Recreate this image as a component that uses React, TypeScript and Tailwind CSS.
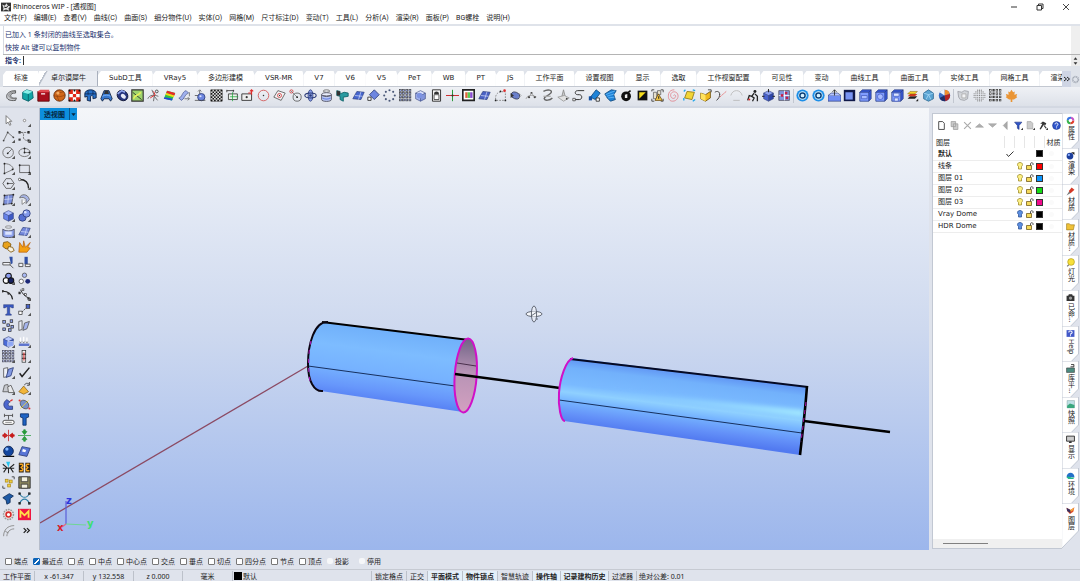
import type { ReactNode } from "react";

const NAVY = "#2a3a78";
const BLUE = "#6d86e0";
const SKY = "#1f83d8";

type Tool = [label: string, art: ReactNode];

const box = (face: string, top: string, side: string) => (
  <>
    <path d="M2 5l6-3 6 3-6 3z" fill={top} />
    <path d="M2 5l6 3v7l-6-3z" fill={face} />
    <path d="M14 5l-6 3v7l6-3z" fill={side} />
    <path d="M2 5l6-3 6 3v7l-6 3-6-3zM2 5l6 3 6-3M8 8v7" fill="none" stroke={NAVY} strokeWidth=".7" />
  </>
);

const dots = (points: number[][], fill = "#222", r = 1.1) =>
  points.map(([x, y]) => <circle key={`${x}-${y}`} cx={x} cy={y} r={r} fill={fill} />);

const squares = (points: number[][], size: number, fill: string, stroke = "#222") =>
  points.map(([x, y]) => (
    <rect key={`${x}-${y}`} x={x} y={y} width={size} height={size} fill={fill} stroke={stroke} strokeWidth=".8" />
  ));

const lattice = (n: number, step: number, start: number) =>
  Array.from({ length: n * n }, (_, i) => [start + (i % n) * step, start + Math.floor(i / n) * step]);

const plane = (fill: string) => (
  <>
    <path d="M1 12L6 3l9 1-4 9z" fill={fill} stroke={NAVY} strokeWidth=".8" />
    <path d="M3.500 8l9.500 1M8 13l3-9.500" stroke="#dfe6ff" strokeWidth=".8" />
  </>
);

const gearBlue = (
  <>
    <circle cx="8" cy="8" r="7.500" fill="#1d8fe8" />
    <circle cx="8" cy="8" r="5.200" fill="#d5f1ff" />
    <circle cx="8" cy="8" r="3.200" fill="none" stroke="#0b3f78" strokeWidth="1.800" />
  </>
);

const blueBlock = (inner: ReactNode) => (
  <>
    <path d="M1 4l3-3h11v11l-3 3H1z" fill="#3657d6" />
    <path d="M1 4h11v11H1z" fill="#7f9cff" />
    <path d="M1 4l3-3h11v11l-3 3H1zM1 4h11v11M12 4l3-3" fill="none" stroke={NAVY} strokeWidth=".8" />
    {inner}
  </>
);

const groupA: Tool[] = [
  ["弯管", <><path d="M13 2C5 2 2 6 2 9c0 4 4 6 11 5l1-3c-5 1-7-1-7-3s2-3 6-3z" fill="#c7c9cd" stroke="#444" /><path d="M12 3C6 4 4 7 5 9s3 3 8 3" fill="none" stroke="#777" /></>],
  ["立方体", <><path d="M2 4l5-3 7 2 1 8-6 4-7-3z" fill="#13a6a6" stroke="#075c66" /><path d="M2 4l7 2 5-3-7-2z" fill="#8af0e8" /><path d="M9 6v9" stroke="#075c66" /></>],
  ["红色方盒", <><path d="M1 3h14v12H1z" fill="#a80f1c" stroke="#500" /><path d="M1 3l3-2h11v3H1z" fill="#e04a50" /><path d="M5 6h5" stroke="#fff" strokeWidth="1.500" /></>],
  ["球体", <><circle cx="8" cy="8" r="7" fill="#d0671a" stroke="#5b2606" /><path d="M1 8c5 2 9 2 14-1M6 1c-2 5-1 10 2 14M3 3c4 2 7 2 10 0" fill="none" stroke="#8e4210" strokeWidth=".8" /><circle cx="6" cy="5" r="2" fill="#f5ab62" /></>],
  ["棋盘格", <><path d="M1 1h14v14H1z" fill="#fff" stroke="#222" /><path d="M1 1h5v5H1zM10 1h5v5h-5zM6 6h4v4H6zM1 10h5v5H1zM10 10h5v5h-5z" fill="#e02818" />{dots([[2, 2], [8, 2], [14, 2], [2, 14], [8, 14], [14, 14]], "#111")}</>],
  ["拱面", <><path d="M1 6c0-3 3-5 7-5s7 2 7 5v5l-4 1V9c0-1-3-1-3 0v6l-4-1V9l-3 1z" fill="#2770c8" stroke="#0b1c3c" /><path d="M5 2v5M11 2v5M1 6h14" stroke="#0b1c3c" strokeWidth=".8" /></>],
  ["圆顶", <><path d="M5 2h6l4 10-2 3-2-3H5l-2 3-2-3z" fill="#3677ce" stroke="#0b1c3c" /><path d="M6 2h4l1 4H5z" fill="#333" /><path d="M3 9c3-2 7-2 10 0" stroke="#8ec3ff" fill="none" /></>],
  ["圆环", <><ellipse cx="8" cy="8" rx="7" ry="6" transform="rotate(40 8 8)" fill="#26357e" stroke="#0a1030" /><ellipse cx="9" cy="9" rx="3.500" ry="2.500" transform="rotate(40 9 9)" fill="#e8ecf8" /><path d="M2 6l5-4 4 2" stroke="#92a9ef" strokeWidth="2" fill="none" /></>],
  ["绿色框", <><path d="M1 1h14v14H1z" fill="#9ed46c" stroke="#333" strokeWidth="1.400" /><path d="M2 4l11 9" stroke="#222" /><path d="M3 12c3-6 6-3 9-8" stroke="#e8ef5a" strokeWidth="2" fill="none" /></>],
  ["修剪", <><path d="M1 12C3 7 9 7 14 9M9 8L6 1M9 8l-1 7M9 9l4 5" stroke="#444" fill="none" strokeWidth=".9" /><path d="M4 11l6-4M8 3l2 4" stroke="#e02b2b" strokeWidth="1.200" /><circle cx="12" cy="3" r="1.700" fill="none" stroke="#333" /></>],
  ["曲率分析", <><path d="M5 2l10 3-4 9-10-2z" fill="#29c04a" /><path d="M5 2l10 3-1 3-10-3z" fill="#e82929" /><path d="M4 5l10 3-1 2-10-3z" fill="#f4d817" /><path d="M2 10l10 2-1 2-10-2z" fill="#2743dd" /></>],
  ["曲面流动", <><path d="M1 11c4 0 4-8 9-9l3 3c-5 1-5 8-9 9z" fill="#9fb0ee" stroke={NAVY} strokeWidth=".7" /><path d="M8 12h6M12 10l2 2-2 2M14 4v5" stroke="#555" fill="none" strokeWidth=".9" /></>],
  ["球面流动", <><circle cx="9" cy="10" r="4.500" fill={BLUE} stroke={NAVY} /><path d="M1 8h4M7 2v4M5 3l2-2 2 2M1 14h13" stroke="#444" fill="none" strokeWidth=".9" /><circle cx="8" cy="9" r="1.300" fill="#dbe3ff" /></>],
  ["网格", <><path d="M1 1h14v14H1z" fill="#eee" stroke="#555" />{lattice(7, 2, 1).filter((_, i) => i % 2 === 0).map(([x, y]) => <rect key={`${x}-${y}`} x={x} y={y} width="2" height="2" fill="#111" />)}</>],
  ["对齐矩形", <><path d="M1 1v3M1 2h9M9 1v3" fill="none" stroke="#333" /><path d="M3 6h11v7H3z" fill="#eaf3ea" stroke="#333" /><path d="M5 9.500h10M8 4v11" stroke="#21a33c" strokeWidth=".9" /></>],
  ["移动矩形", <><path d="M1 6h12v8H1z" fill="#eee" stroke="#333" strokeWidth="1.100" /><circle cx="7" cy="10" r="1.300" fill="#333" /><path d="M9 5h4M13 1v6M11 3l2-2 2 2" stroke="#e02b2b" fill="none" strokeWidth="1.300" /></>],
  ["圆", <><circle cx="8" cy="8" r="6.500" fill="none" stroke="#d25a5a" strokeWidth="1.100" />{dots([[8, 8]], "#333", 0.9)}</>],
  ["定向", <><path d="M6 2l9 3-5 9-9-4z" fill="#f4f4f6" stroke="#555" /><circle cx="8" cy="8" r="2.500" fill="none" stroke="#d23a3a" />{dots([[8, 8]], "#333", 0.8)}</>],
  ["切线圆", <><circle cx="10" cy="10" r="5" fill="none" stroke="#555" /><path d="M2 2l8 8" stroke="#777" /><circle cx="3" cy="3" r="2" fill="none" stroke="#d23a3a" />{dots([[10, 10]])}</>],
  ["三维旋转", <><ellipse cx="8" cy="8" rx="3" ry="7" fill="#8ba0ea" stroke={NAVY} /><ellipse cx="8" cy="8" rx="7" ry="3" fill="none" stroke={NAVY} strokeWidth="1.300" />{dots([[8, 8]], NAVY, 1.6)}</>],
  ["放样", <><ellipse cx="8" cy="2.500" rx="4" ry="1.500" fill="none" stroke="#666" /><ellipse cx="8" cy="6.500" rx="6" ry="2" fill="#e8edfb" stroke="#556" /><path d="M2 7v6c0 3 12 3 12 0V7c-1 3-11 3-12 0z" fill="#b9c8f6" stroke="#445" /><path d="M3 11c2 2 8 2 10 0" fill="none" stroke={BLUE} strokeWidth="1.500" /></>],
  ["夹具", <><path d="M1 2l4 1v3l5-2 5 1v4l-6 1v5l-4-2V9L1 8z" fill="#2a9aa0" stroke="#0a5e64" /><path d="M1 2l4 1v5L1 8z" fill="#333" /></>],
  ["平面", plane("#4666cf")],
  ["菱形面", <><path d="M9 1l6 6-6 6-6-6z" fill={BLUE} stroke={NAVY} /><path d="M1 10h4v4H1z" fill="#fff" stroke="#222" /></>],
  ["环形阵列", <>{dots([[8, 1.5], [12.5, 3.500], [14.5, 8], [12.5, 12.500], [8, 14.500], [3.5, 12.500], [1.5, 8], [3.5, 3.500]], "#4a5878", 1.3)}</>],
  ["矩形阵列", <>{squares(lattice(4, 3.9, 0.5), 2.4, "#8fa0e0", "#444")}</>],
  ["球体方盒", <>{box("#a5b4ee", "#dbe2fb", "#8496dc")}<circle cx="7" cy="8" r="3.500" fill="#7d93e2" /></>],
];

const groupB: Tool[] = [
  ["企鹅", <><path d="M3 1h10v14H3z" fill="#f6f6f6" stroke="#333" strokeWidth="1.200" /><path d="M5 6c0-4 6-4 6 0z" fill="#333" /><path d="M5 7h6v6H5z" fill="#fff" stroke="#333" /></>],
  ["坐标轴", <><path d="M8 1v14" stroke="#2a9a3c" strokeWidth="1.300" /><path d="M0 8h16" stroke="#cc2f2f" strokeWidth="1.300" /><circle cx="8" cy="8" r="1.300" fill="#333" /></>],
  ["图像平面", <><path d="M1 1h14v13H1z" fill="#fff" stroke="#222" strokeWidth="2" /><path d="M4 4h3v7H4z" fill="#e2653d" /><path d="M7 4h3v7H7z" fill="#57cf52" /><path d="M10 4h3v7h-3z" fill="#8a4cd0" /></>],
  ["曲面网", plane("#4a62c4")],
  ["曲线控制点", <><path d="M2 13c-1-9 6-11 12-9M3 14h11V5" fill="none" stroke="#777" strokeDasharray="2 1.500" />{dots([[2, 14], [8, 3], [14, 14]])}{dots([[13, 2]], "#dd2b2b", 1.6)}</>],
  ["椭球", <><ellipse cx="8" cy="8" rx="5.500" ry="4" transform="rotate(20 8 8)" fill="#6a7fcb" stroke="#3a3f5c" /><path d="M2 5l4 3-4 3z" fill="#333" /><path d="M12 5l3 3-3 3" stroke="#aaa" fill="none" /></>],
  ["点编辑", <><path d="M1 12c4-6 8-5 13-2" fill="none" stroke="#aaa" strokeWidth="1.300" />{dots([[5, 10], [8, 5], [12, 10]], "#444", 1.3)}<path d="M8 5l4 5M8 5l-3 5" stroke="#888" strokeWidth=".8" /></>],
  ["扫掠", <><path d="M3 3c5-3 12-2 9 2s-9 4-8 7 7 2 10-1" fill="none" stroke="#666" strokeWidth="1.700" /><path d="M3 9h9" stroke="#aaa" strokeWidth="1.500" /></>],
  ["尖锥", <><path d="M8 1l2 8H6z" fill="#ccc" stroke="#888" /><path d="M1 10l8-2 6 3-7 4z" fill="#e2e2e2" stroke="#999" />{dots([[12, 12]], "#444")}</>],
  ["曲线混接", <><path d="M15 2H7c-4 0-4 5 0 5h2c4 0 4 6 0 6H2" fill="none" stroke="#333" strokeWidth="1.200" /><path d="M1 11.500h3v3H1z" fill="#fff" stroke="#222" strokeWidth=".8" /></>],
  ["蓝色刷", <><path d="M3 10l7-9 5 4-6 8z" fill={SKY} stroke="#0c4477" /><path d="M1 9h4v5H1z" fill="#1450a0" /><path d="M10 11h4v4h-4z" fill="#fff" stroke="#222" /></>],
  ["蓝色扇面", <><path d="M1 6l8-5 6 1-3 5 2 6-6 2-4-4z" fill={SKY} stroke="#0c4477" /><path d="M2 7l12-5M3 9l10-3M5 11l8-1" stroke="#78c8ff" strokeWidth=".8" /></>],
  ["旋钮", <><circle cx="7.500" cy="9" r="6" fill="#111" /><path d="M6 7l3-1v5H6z" fill="#eee" /><path d="M9 5l4-3" stroke="#111" strokeWidth="2" /></>],
  ["黑黄方块", <><path d="M2 2h12v12H2z" fill="#111" /><path d="M4 4h8l-8 8z" fill="#f5dc1b" /></>],
  ["警告", <><path d="M1 3V1h3M12 1h3v3M1 12v3h3M12 15h3v-3" stroke="#333" fill="none" /><path d="M3 4h4v8H3zM8 2h4v5H8z" fill="#e6e0cc" stroke="#666" /><path d="M9 6l5 8H5z" fill="#f5cc4b" stroke="#6a4a10" /><path d="M9.500 9v3" stroke="#222" strokeWidth="1.300" /></>],
  ["螺旋", <><path d="M8 8c1-2 4 0 2 2.500S4 11 4.500 7 11 2 13 6s-1 9-6 9S1 10 2 6s4-5 7-5" fill="none" stroke="#e0808a" strokeWidth="1" /></>],
  ["黄色面", <><path d="M5 3l9 1-3 9-9-2z" fill="#f2d536" stroke="#8a7410" /><path d="M1 3l2-2M12 1l3 1M1 14v-3M12 15l3-2" stroke="#21a5e8" strokeWidth="1.600" /></>],
  ["黄色盒", <><path d="M2 5l6 2 6-4v8l-6 4-6-3z" fill="#efb91d" stroke="#6b4c07" /><path d="M2 5l6 2v8l-6-3z" fill="#ffe25e" /><path d="M11 1h4v3" fill="none" stroke="#333" /></>],
  ["曲线延伸", <><path d="M3 14c3-2 4-5 4-8M1 4c3-2 6-1 6 3" fill="none" stroke="#444" strokeWidth="1.200" /><path d="M7 10L15 3" stroke="#e15252" strokeDasharray="2 1" /></>],
  ["灰拱", <><path d="M1 8c2-8 12-8 14 0M4 14h8" fill="none" stroke="#bbb" strokeWidth="1.100" /></>],
  ["人形", <><circle cx="11" cy="3" r="1.800" fill="#222" /><path d="M10 5l-3 4 3 2-2 4M11 6l3 3v6M2 14l2-6 3 1" fill="none" stroke="#222" strokeWidth="1.600" />{dots([[4, 13]], "#de3131", 1.3)}</>],
  ["蓝色立方", <>{box("#4a64cf", "#8da2f2", "#2f46a8")}<path d="M8 0v4M0 9h3M13 9h3" stroke="#222" strokeWidth="1.200" /></>],
  ["拼块", <><path d="M1 2h13v12H1z" fill="#8398dd" stroke="#556" /><path d="M8 2v12M1 8h13" stroke="#fff" />{dots([[10, 5], [5, 8], [11, 11]], "#c4214b", 1.7)}</>],
];

const groupC: Tool[] = [
  ["设置", gearBlue],
  ["选项", gearBlue],
  ["挤出", <><path d="M0 8h16v7H0z" fill="#6f8df4" stroke={NAVY} strokeWidth=".8" /><path d="M0 8l4-3h8l4 3" fill="#b6c5ff" stroke={NAVY} strokeWidth=".8" /><path d="M8 8V1M5.500 3.500L8 1l2.500 2.500" fill="none" stroke="#222" /></>],
  ["深蓝框", <><path d="M1 1h14v14H1z" fill="#10194a" /><path d="M3 4h9v9H3z" fill="#7893f2" /></>],
  ["蓝盒", blueBlock(<path d="M3 8h7v4H3z" fill="#a9bcff" stroke="#4a62c8" />)],
  ["圆孔盒", blueBlock(<circle cx="6.500" cy="9.500" r="3.500" fill="#a9bcff" stroke="#4a62c8" />)],
  ["存盘盒", blueBlock(<path d="M3 5h7v4H3zM4 11h5v4H4z" fill="#dbe4ff" stroke="#4a62c8" />)],
  ["图层堆叠", <><path d="M2 12l3-3h9l-3 3z" fill="#222" /><path d="M2 9l3-3h9l-3 3z" fill="#d33820" /><path d="M2 6l3-3h9l-3 3z" fill="#f6d32b" stroke="#7b5b0e" strokeWidth=".6" /><path d="M12 15l3-3v3z" fill="#222" /></>],
  ["多面体", <><path d="M8 1l6 4v7l-6 3-6-3V5z" fill="#5aa4d3" stroke="#2e6890" /><path d="M2 5l6 2 6-2M8 7l-3 6M8 7l3 6" stroke="#b9e4ff" fill="none" strokeWidth=".8" /></>],
  ["色球", <><circle cx="8" cy="8" r="7" fill="#3a6fc8" /><path d="M8 8L8 1a7 7 0 0 1 6.500 5z" fill="#ef8c2d" /><path d="M8 8l6.500-2A7 7 0 0 1 9 15z" fill="#b52323" /><path d="M8 8L2 4a7 7 0 0 1 6-3z" fill="#eef3fb" /><path d="M8 8l1 7a7 7 0 0 1-7-4z" fill="#222d66" /></>],
];

const groupD: Tool[] = [
  ["灰旗", <><path d="M1 3l5 1 3-2 5 1-1 9-4 2-5-1-2-3z" fill="#d2d5da" stroke="#9d9fa6" /><path d="M6 6h5v5H6z" fill="#f2f3f5" stroke="#aaa" /></>],
  ["点阵球", <>{dots(lattice(7, 2.2, 1.4).filter(([x, y]) => (x - 8) ** 2 + (y - 8) ** 2 < 50), "#777", 0.7)}</>],
  ["点阵", <>{squares(lattice(4, 4, 0.7), 2, "#fff", "#333")}</>],
  ["枫叶", <path d="M8 1l2 3 2-1-.5 4L15 6l-1 3 1 1-4 3H9v3H7v-3H5l-4-3 1-1-1-3 3.500 1L4 3l2 1z" fill="#ea9535" />],
];

const sideTools: Tool[] = [
  ["选择", <path d="M5 2v10l2.500-2 2 4 1.500-1-2-4h3z" fill="#fff" stroke="#666" />],
  ["点", <circle cx="8" cy="8" r="1.500" fill="#fff" stroke="#777" />],
  ["多段线", <><path d="M2 13L7 3l7 6" fill="none" stroke="#666" />{dots([[2, 13], [7, 3], [14, 9]], "#444")}</>],
  ["控制点曲线", <><path d="M3 3h10M3 3c9 0-2 9 9 10" fill="none" stroke="#666" strokeDasharray="3 1" />{squares([[1, 2], [12, 2], [1, 11], [12, 12]], 2, "#fff")}</>],
  ["圆", <><circle cx="7.500" cy="8" r="6.500" fill="none" stroke="#666" /><path d="M7 9l5-5" stroke="#555" />{dots([[7, 9]])}</>],
  ["椭圆", <><ellipse cx="8" cy="8" rx="7" ry="5" fill="none" stroke="#666" /><path d="M8 3v5h6" fill="none" stroke="#666" />{dots([[8, 8], [8, 3], [14, 8]])}</>],
  ["圆弧", <><path d="M3 2c8 0 11 5 11 7L3 14z" fill="none" stroke="#666" />{dots([[3, 2], [13, 9], [3, 14]])}</>],
  ["矩形", <><path d="M2 4h12v9H2z" fill="none" stroke="#555" />{dots([[2, 4], [14, 13]])}</>],
  ["多边形", <><path d="M5 2h6l4 6-4 6H5L1 8z" fill="none" stroke="#555" /><path d="M7 8h7" stroke="#555" />{dots([[7, 8]])}</>],
  ["圆角", <><path d="M2 3c7 0 11 3 11 11" fill="none" stroke="#222" strokeWidth="1.700" /><circle cx="2" cy="3" r="1.500" fill="#fff" stroke="#444" /></>],
  ["曲面", <><path d="M3 3l11-1-2 11-10 1z" fill="#7c90dc" stroke="#445" />{dots([[3, 3], [14, 2], [12, 13], [2, 14]])}<path d="M3 8l10-1M8 3l-1 11" stroke="#dde5ff" strokeWidth=".8" /></>],
  ["旋转曲面", <><path d="M2 6C3 1 12 0 14 8l-4 5V8C8 5 5 5 2 6z" fill="#a7b4e4" stroke="#666" /><path d="M5 8v6l4-3" fill="#fff" stroke="#777" /></>],
  ["立方体", box("#6783ea", "#a9bbff", "#3e59c4")],
  ["布尔", <><circle cx="5.500" cy="10.500" r="4.500" fill="#5570d2" stroke={NAVY} /><circle cx="10.500" cy="5.500" r="4.500" fill="#8299ea" stroke={NAVY} /><circle cx="9" cy="4" r="1.500" fill="#dbe4ff" /></>],
  ["管状", <><ellipse cx="8" cy="2.500" rx="4" ry="1.500" fill="none" stroke="#888" /><path d="M1 5c3 3 11 3 14 0v9c-3 2-11 2-14 0z" fill="#91a5ee" stroke="#445" /><path d="M4 8h8v4H4z" fill="#dce4ff" /></>],
  ["网格面", plane("#7388db")],
  ["拼图", <><path d="M2 3l5-1 4 3-1 4-5 2-4-3z" fill="#e9a21b" stroke="#7d5205" /><path d="M8 8l5 1 2 4-4 2-4-3z" fill="#f8f1de" stroke="#7d5205" /></>],
  ["炸开", <path d="M1 15l1-12 4 6 1-8 2 8 6-6-3 6 3 1-4 5z" fill="#f4a012" stroke="#b25606" strokeWidth=".8" />],
  ["修剪", <><path d="M9 1h4v8l-2 1z" fill="#2f4fa4" /><path d="M1 8h9v3H1zM10 11l4 4" stroke="#444" fill="#f3f4f7" /></>],
  ["分割", <><path d="M8 1h4v9H8z" fill="#2f4fa4" /><path d="M1 9h5v4H1zM9 10h6v3H9z" fill="#f3f4f7" stroke="#444" /></>],
  ["群组", <><circle cx="8" cy="5" r="3.500" fill="#8c9ef0" stroke="#111" strokeWidth="1.300" /><circle cx="5" cy="10.500" r="3.500" fill="#fff" stroke="#111" strokeWidth="1.300" /><circle cx="11" cy="10.500" r="3.500" fill="#16205e" stroke="#111" strokeWidth="1.300" /></>],
  ["解散群组", <><circle cx="8" cy="4" r="2.700" fill="#a7b8f4" stroke="#555" /><circle cx="4" cy="11.500" r="2.700" fill="#fff" stroke="#555" /><circle cx="12" cy="11.500" r="3" fill="#1e2a78" /></>],
  ["弧线", <><path d="M1 4c7 0 11 4 12 10" fill="none" stroke="#222" strokeWidth="1.500" />{dots([[1, 4], [8, 7]], "#333", 1.4)}</>],
  ["弧线控制", <><path d="M3 2c3 6 6 9 12 11" fill="none" stroke="#333" strokeWidth="1.200" />{squares([[1, 5], [5, 1], [8, 7], [12, 12]], 2.2, "#fff")}</>],
  ["文字", <path d="M2 2h12v4h-2l-1-1H9.500v8l2 1v1h-7v-1l2-1V5H5L4 6H2z" fill="#3858c0" stroke={NAVY} strokeWidth=".6" />],
  ["连接", <><path d="M5 11l6-6" stroke="#333" strokeDasharray="2 1" />{squares([[1, 10]], 4, "#fff")}{squares([[10, 2]], 4.5, "#4863c8")}</>],
  ["散布", <>{squares([[1, 2], [10, 1], [6, 6], [11, 8], [1, 11], [8, 12]], 3.2, "#8fa3ea")}</>],
  ["板", <><path d="M1 3l4-1v11l-4 1z" fill="#e9ecf5" stroke="#555" /><path d="M8 5l6-2-3 9-5 2z" fill="#a4b4ee" stroke="#555" /></>],
  ["块", <>{box("#4b6bd8", "#b8c8ff", "#3653b8")}<path d="M7 8h7v6H7z" fill="#8da6f6" stroke="#fff" strokeWidth=".6" /></>],
  ["投影", <><path d="M1 12h13" stroke="#5d74ce" strokeWidth="3" /><path d="M3 9V3M7 9V2M11 9V3" stroke="#fff" strokeWidth="1.600" /><path d="M2 8l1 2 1-2M6 8l1 2 1-2M10 8l1 2 1-2" stroke="#444" fill="none" strokeWidth=".6" /></>],
  ["阵列", <>{squares(lattice(4, 3.9, 0.5), 2.4, "#c4cef6", "#445")}</>],
  ["堆叠", <>{squares([[5, 0.5], [5, 5.5], [5, 10.500]], 4.5, "#f6f6f6")}<path d="M7.300 3v10" stroke="#d32a2a" strokeWidth="1.300" /></>],
  ["旋转面", <><path d="M2 3l5-1v11l-5 1z" fill="#eef0f7" stroke="#555" /><path d="M8 4l6-2-3 10-6 2z" fill="#8299e2" stroke={NAVY} /></>],
  ["检查", <path d="M2 9l3 4 9-11" fill="none" stroke="#222" strokeWidth="1.800" />],
  ["灰形", <><path d="M1 12l2-8 4-1 3 9z" fill="#c8cad0" stroke="#555" /><path d="M7 6l4-2 4 9H8z" fill="#e8e9ec" stroke="#555" /></>],
  ["锥体", <><path d="M7 5l6 7-6 3-6-3z" fill="#f2b63b" stroke="#7b550f" strokeWidth=".8" /><path d="M8 4c1-3 4-3 6-1M14 0v4h-3" fill="none" stroke="#333" /></>],
  ["弯管", <><path d="M6 2c-5 3-5 9 0 12h7v-4H9C7 9 7 6 10 5z" fill="#4a66cf" stroke={NAVY} /><path d="M13 2l-3 2" stroke="#d33" strokeWidth="1.500" /></>],
  ["椭球", <><ellipse cx="8" cy="8" rx="6" ry="4.500" transform="rotate(45 8 8)" fill="#7891cb" stroke="#555" /><path d="M3 13L13 3" stroke="#e8d43b" />{dots([[2, 3], [14, 13]], "#d33", 1.3)}</>],
  ["尺寸", <><path d="M3 3h10M8 3v5M3 1v4M13 1v4" stroke="#444" /><rect x="1" y="9" width="14" height="5" rx="2.500" fill="#fff" stroke="#333" /><path d="M4 11.500h8" stroke="#777" /></>],
  ["螺栓", <path d="M3 1h10v4l-3 1v9H6V6L3 5z" fill="#1e63c4" stroke="#0b2d66" />],
  ["水平对齐", <path d="M8 1v14M1 7h3v2H1zM12 7h3v2h-3zM3 5v6l4-3zM13 5v6L9 8z" fill="#d61f1f" stroke="#c01515" strokeWidth=".9" />],
  ["垂直对齐", <path d="M0 8h16M5 3h6L8 7zM5 13h6L8 9zM7 1h2v3H7zM7 12h2v3H7z" fill="#27993a" stroke="#27993a" strokeWidth=".9" />],
  ["蓝球", <><path d="M1 14h14" stroke="#111" strokeWidth="1.500" /><circle cx="8" cy="7.500" r="6" fill="#12459f" stroke="#071c48" /><circle cx="6" cy="5" r="2" fill="#86b9ff" /></>],
  ["贴面", <><path d="M5 2l10 2-4 10-10-2z" fill="#5875d6" stroke={NAVY} /><path d="M6 5l4 1-1 3-4-1z" fill="#fff" /></>],
  ["切割", <><path d="M1 4l5 4-4 6M15 4l-5 4 4 6M8 8v7M1 9h14" fill="none" stroke="#222" strokeWidth="1.300" /><path d="M5 1h5l-2 7z" fill="#2bc3ec" /></>],
  ["拉链", <><path d="M1 2h6v12H1zM9 2h6v12H9z" fill="#2b2318" /><path d="M2 4h3l1 2-2 2 2 2-1 2H2M14 4h-3l-1 2 2 2-2 2 1 2h3" fill="none" stroke="#f5a51e" strokeWidth="1.800" /></>],
  ["选取方块", <>{squares([[4, 4], [9, 5], [7, 10]], 3.5, "#f2cf3b", "#a5831c")}<path d="M12 1h3v3M1 12v3h3" fill="none" stroke="#333" /></>],
  ["存储", <><path d="M1 1h14v14H1z" fill="#8c875e" stroke="#222" /><path d="M4 1h8v6H4zM4 10h8v5H4z" fill="#f2f0de" stroke="#333" /></>],
  ["蓝曲面", <path d="M1 7l8-5 5 3-4 3v5l-4 2-1-5z" fill="#1e5aa6" stroke="#0c2a55" />],
  ["节点曲线", <><path d="M2 2c3 6 9 6 12 0M2 14c3-7 9-7 12 0" fill="none" stroke="#2d7fa8" strokeWidth="1.300" />{squares([[1, 1], [13, 1], [1, 13], [13, 13]], 2, "#234")}</>],
  ["齿轮", <><circle cx="8" cy="8" r="6" fill="#f7eeee" stroke="#9a9a9a" strokeWidth="2" strokeDasharray="2 1" /><circle cx="8" cy="8" r="3" fill="#fff" stroke="#d72d2d" strokeWidth="2" /></>],
  ["渲染器", <><path d="M0 1h16v14H0z" fill="#ee1641" /><path d="M3 12V4l5 5 5-5v8" fill="none" stroke="#ffe14a" strokeWidth="2.200" /></>],
  ["偏移", <path d="M2 15C2 7 7 2 15 2M6 15c0-5 4-9 9-9M4 9l4 2" fill="none" stroke="#888" strokeWidth="1.100" />],
  ["更多", <path d="M7 5l3 3-3 3M11 5l3 3-3 3" fill="none" stroke="#222" strokeWidth="1.500" />],
];

const plainTools = new Set([0, 16, 17, 18, 19, 21, 22, 24, 26, 27]);

const menus = ["文件(F)", "编辑(E)", "查看(V)", "曲线(C)", "曲面(S)", "细分物件(U)", "实体(O)", "网格(M)", "尺寸标注(D)", "变动(T)", "工具(L)", "分析(A)", "渲染(R)", "面板(P)", "BG螺栓", "说明(H)"];

const toolTabs = ["标准", "卓尔谟犀牛", "SubD工具", "VRay5", "多边形建模", "VSR-MR", "V7", "V6", "V5", "PeT", "WB", "PT", "JS", "工作平面", "设置视图", "显示", "选取", "工作视窗配置", "可见性", "变动", "曲线工具", "曲面工具", "实体工具", "网格工具", "渲染"];

const layers = [
  { name: "默认", color: "#000000", current: true, on: true },
  { name: "线条", color: "#ff0000", current: false, on: true },
  { name: "图层 01", color: "#0a96ff", current: false, on: true },
  { name: "图层 02", color: "#14dc14", current: false, on: true },
  { name: "图层 03", color: "#f00a8c", current: false, on: true },
  { name: "Vray Dome", color: "#000000", current: false, on: false },
  { name: "HDR Dome", color: "#000000", current: false, on: false },
];

const panelTabs: Tool[] = [
  ["属性", <><circle cx="8" cy="8" r="5" fill="none" stroke="#e2402e" strokeWidth="3.500" strokeDasharray="8 24" /><circle cx="8" cy="8" r="5" fill="none" stroke="#37b34a" strokeWidth="3.500" strokeDasharray="8 24" strokeDashoffset="-8" /><circle cx="8" cy="8" r="5" fill="none" stroke="#3b76e0" strokeWidth="3.500" strokeDasharray="8 24" strokeDashoffset="-16" /><circle cx="8" cy="8" r="5" fill="none" stroke="#c553c8" strokeWidth="3.500" strokeDasharray="8 24" strokeDashoffset="-24" /></>],
  ["渲染", <><circle cx="7" cy="9" r="6" fill="#1c3e9c" /><circle cx="5" cy="7" r="2" fill="#8fb2ff" /><path d="M9 2h6v5" fill="#222" /></>],
  ["材质", <><path d="M1 15l5-8 3 3z" fill="#777" /><path d="M5 7l5-6 5 4-7 6z" fill="#d43a28" /></>],
  ["材质…", <path d="M1 3h5l2 2h7l-2 9H1z" fill="#f0c239" stroke="#94700e" />],
  ["灯光", <><path d="M5 12L2 15" stroke="#777" strokeWidth="2" /><circle cx="9" cy="7" r="6" fill="#f7e03a" stroke="#a08b0e" /></>],
  ["已命…", <><path d="M1 5h3l1-3h6l1 3h3v9H1z" fill="#333" /><circle cx="8" cy="9" r="3" fill="#999" /></>],
  ["Help", <><path d="M1 2h14v12H1z" fill="#4258c8" /><path d="M5 6c0-4 6-3 6 0 0 2-3 1-3 4M8 11v2" stroke="#fff" strokeWidth="1.800" fill="none" /></>],
  ["库平…", <><path d="M1 7h14v8H1z" fill="#4c8c80" stroke="#333" /><path d="M9 1h5v4H8" fill="none" stroke="#222" strokeWidth="1.500" /></>],
  ["快照", <><path d="M2 1h13v13H2z" fill="#bfe0e6" stroke="#8aa" /><path d="M2 10l5-4 8 3v5H2z" fill="#3aa77d" /></>],
  ["显示", <><path d="M1 2h14v9H1z" fill="#ccc" stroke="#222" strokeWidth="1.500" /><path d="M6 11h4v3H5z" fill="#333" /></>],
  ["环境", <><path d="M1 11a7 8 0 0 1 14 0z" fill="#2470c8" /><path d="M1 11c4-4 8 3 14 0l-2 3H4z" fill="#25b78c" /></>],
  ["图层", <><path d="M1 3l7 4 7-5-2 8-6 4-5-5z" fill="#e4502b" /><path d="M1 3l7 4v6L2 9z" fill="#3a3060" /><path d="M8 7l6-4-1 4-5 3z" fill="#f5b03a" /></>],
];

const snaps = [
  { label: "端点", on: false }, { label: "最近点", on: true }, { label: "点", on: false }, { label: "中点", on: false },
  { label: "中心点", on: false }, { label: "交点", on: false }, { label: "垂点", on: false }, { label: "切点", on: false },
  { label: "四分点", on: false }, { label: "节点", on: false }, { label: "顶点", on: false },
];

const modes = [
  { label: "锁定格点", on: false, width: "w-[35px]" }, { label: "正交", on: false, width: "w-[21px]" },
  { label: "平面模式", on: true, width: "w-[35px]" }, { label: "物件锁点", on: true, width: "w-[35px]" },
  { label: "智慧轨迹", on: false, width: "w-[35px]" }, { label: "操作轴", on: true, width: "w-[28px]" },
  { label: "记录建构历史", on: true, width: "w-[48px]" }, { label: "过滤器", on: false, width: "w-[28px]" },
];

function Icon({ children, className = "size-[13px]" }: { children: ReactNode; className?: string }) {
  return <svg viewBox="0 0 16 16" className={`${className} shrink-0`} fill="none" aria-hidden="true">{children}</svg>;
}

function ToolGroup({ tools, className }: { tools: Tool[]; className: string }) {
  return (
    <div className={`flex shrink-0 items-center ${className}`}>
      {tools.map(([label, art]) => (
        <button key={label} type="button" aria-label={label} className="flex min-w-0 flex-1 justify-center">
          <Icon>{art}</Icon>
        </button>
      ))}
    </div>
  );
}

function TitleBar() {
  return (
    <header className="bg-white">
      <div className="flex h-[13px] items-center pl-px">
        <Icon className="size-[10px]"><path d="M0 1h16v14H0z" fill="#333" /><path d="M2 4l4 2 3-4 2 4 4 1-3 3 1 4-5-2-5 2 1-4z" fill="#ddd" /><path d="M5 8l3 1 3-2" stroke="#111" strokeWidth="1.500" /></Icon>
        <h1 className="ml-[2px] text-[7px] leading-none text-[#222]">Rhinoceros WIP - [透视图]</h1>
        <div className="ml-auto flex items-center gap-[18px] pr-[10px] text-[#333]">
          <button type="button" aria-label="最小化"><Icon className="size-[8px]"><path d="M2 8h12" stroke="currentColor" strokeWidth="2" /></Icon></button>
          <button type="button" aria-label="还原"><Icon className="size-[8px]"><path d="M2 5h9v9H2zM5 5V2h9v9h-3" stroke="currentColor" strokeWidth="2" /></Icon></button>
          <button type="button" aria-label="关闭"><Icon className="size-[8px]"><path d="M2 2l12 12M14 2L2 14" stroke="currentColor" strokeWidth="1.800" /></Icon></button>
        </div>
      </div>
      <nav className="flex h-[11px] items-center gap-[7px] pl-[4px] font-['Roboto','Noto_Sans_CJK_SC',sans-serif] text-[7px] leading-none text-[#222]">
        {menus.map((m) => <button key={m} type="button" className="whitespace-nowrap">{m}</button>)}
      </nav>
    </header>
  );
}

function CommandArea() {
  return (
    <section className="border-t-2 border-b-[5px] border-[#dfe3ea] bg-white pl-[3px] text-[7px] text-[#25346f]">
      <div className="flex border-l border-[#d5d9e2]">
        <div className="flex h-[28px] flex-1 flex-col justify-center pt-[2px] pl-px leading-[13px]">
          <p>已加入 1 条封闭的曲线至选取集合。</p>
          <p>快按 Alt 键可以复制物件</p>
        </div>
        <div className="w-[9px] bg-[#efefef]" />
      </div>
      <div className="flex h-[12px] items-center border-t border-[#b4b4b4] pl-[2px]">
        <label htmlFor="command" className="pb-px leading-none font-bold">指令:</label>
        <span className="ml-[2px] h-[9px] w-px bg-[#333]" />
        <input id="command" className="h-[10px] min-w-0 flex-1 border-none bg-transparent px-[2px] outline-none" />
        <div className="flex w-[9px] flex-col items-center justify-between self-stretch bg-[#ececec] py-px">
          <Icon className="size-[5px]"><path d="M2 12l6-8 6 8z" fill="#333" /></Icon>
          <Icon className="size-[5px]"><path d="M2 4l6 8 6-8z" fill="#333" /></Icon>
        </div>
      </div>
    </section>
  );
}

function ToolTabs() {
  return (
    <div className="flex h-[16px] overflow-hidden bg-[#dfe3ea] pl-[3px] font-['DejaVu_Sans','Noto_Sans_CJK_SC',sans-serif]">
      <div role="tablist" className="flex min-w-0 flex-1 overflow-hidden border-b border-[#c3c8d1]">
        {toolTabs.map((t, i) => (
          <button
            key={t}
            type="button"
            role="tab"
            aria-selected={i === 1}
            className={
              i === 1
                ? "h-full shrink-0 border-r border-[#a9b0bd] bg-[linear-gradient(120deg,#ffffff_6px,#b9bfca_6px,#b9bfca_7px,#e9ecf2_8px)] pr-[11px] pl-[12px] text-[7px] leading-none whitespace-nowrap text-[#222]"
                : "h-full shrink-0 bg-white px-[11px] text-[7px] leading-none whitespace-nowrap text-[#222] [clip-path:polygon(0_4px,3px_0,calc(100%_-_1px)_0,100%_3px,100%_100%,0_100%)]"
            }
          >
            {t}
          </button>
        ))}
      </div>
      <button type="button" aria-label="更多标签" className="flex w-[9px] items-center justify-center bg-[#cfd5e4]">
        <Icon className="size-[8px]"><path d="M2 4l5 4-5 4M8 4l5 4-5 4" stroke="#222" strokeWidth="2" /></Icon>
      </button>
      <button type="button" aria-label="工具列设置" className="flex w-[9px] items-center justify-center">
        <Icon className="size-[9px]"><circle cx="8" cy="8" r="5" stroke="#a3a9b4" strokeWidth="3" strokeDasharray="2 1" /></Icon>
      </button>
    </div>
  );
}

function Divider() {
  return <span className="mx-px h-[14px] w-px shrink-0 bg-[#c2c7d0]" />;
}

function SideTools() {
  return (
    <aside className="w-[39px] shrink-0 pt-[5px] pr-[7px] pb-[12px]">
      <div className="grid h-full grid-cols-2 grid-rows-[repeat(27,minmax(0,1fr))]">
        {sideTools.map(([label, art], i) => (
          <button key={label} type="button" aria-label={label} className="flex items-center justify-center">
            <Icon>
              {art}
              {i < 36 && !plainTools.has(i) && <path d="M16 12v4h-4z" fill="#555" />}
            </Icon>
          </button>
        ))}
      </div>
    </aside>
  );
}

function Viewport() {
  return (
    <main className="relative min-w-0 flex-1 border-l border-[#b6bdcb] bg-linear-to-b from-[#f4f6f9] via-[#ced9ef] to-[#9cb6ec]">
      <svg viewBox="40 108 889 442" className="absolute inset-0 size-full" preserveAspectRatio="none" role="img" aria-label="透视图场景">
        <defs>
          <linearGradient id="bodyA" gradientUnits="userSpaceOnUse" x1="395" y1="331" x2="386" y2="402">
            <stop offset="0" stopColor="#70b0fa" /><stop offset=".3" stopColor="#7dbcff" /><stop offset=".6" stopColor="#76b2ff" /><stop offset=".85" stopColor="#6797fb" /><stop offset="1" stopColor="#5882f4" />
          </linearGradient>
          <linearGradient id="bodyB" gradientUnits="userSpaceOnUse" x1="688" y1="372" x2="680" y2="438">
            <stop offset="0" stopColor="#5f93f3" /><stop offset=".15" stopColor="#72b1fb" /><stop offset=".4" stopColor="#7abaff" /><stop offset=".52" stopColor="#8fd0ff" /><stop offset=".65" stopColor="#76b4ff" /><stop offset=".85" stopColor="#6390f8" /><stop offset="1" stopColor="#527af0" />
          </linearGradient>
          <linearGradient id="shine" gradientUnits="userSpaceOnUse" x1="590" y1="390" x2="806" y2="415">
            <stop offset="0" stopColor="#8fd4ff" stopOpacity="0" /><stop offset="1" stopColor="#a2e8ff" />
          </linearGradient>
          <linearGradient id="mouth" x1="0" y1="0" x2="0" y2="1">
            <stop offset="0" stopColor="#6f6485" /><stop offset=".45" stopColor="#b793b5" /><stop offset="1" stopColor="#d3a0c0" />
          </linearGradient>
          <filter id="soften" x="-10%" y="-80%" width="120%" height="260%"><feGaussianBlur stdDeviation="2" /></filter>
        </defs>
        <path d="M40 523L308 366" stroke="#8b4a63" strokeWidth="1.300" />
        <path d="M324 322L469 340L463 412L321 391C304 389 304 328 324 322z" fill="url(#bodyA)" />
        <path d="M308 366L455 386" stroke="#17305e" strokeWidth="1" />
        <path d="M322 322L469 340" stroke="#000" strokeWidth="2.200" />
        <path d="M328 322C314 321 308 345 308 364C308 381 314 392 323 391" fill="none" stroke="#0b0612" strokeWidth="2" />
        <path d="M311 341C308 352 308 372 310 381" fill="none" stroke="#a01ab0" strokeWidth="1.200" strokeDasharray="4 5" />
        <ellipse cx="465.700" cy="375.500" rx="11" ry="37" transform="rotate(4 465.700 375.500)" fill="url(#mouth)" stroke="#d010c8" strokeWidth="2" />
        <path d="M457 363L476 366" stroke="#4a2f4c" />
        <path d="M455 374L560 388" stroke="#000" strokeWidth="2.400" />
        <path d="M572 358L807 387L800 455L564 421C557 416 557 366 572 358z" fill="url(#bodyB)" />
        <path d="M590 388L804 410L803 417L590 392z" fill="url(#shine)" filter="url(#soften)" />
        <path d="M559 400L802 433" stroke="#17305e" strokeWidth="1" />
        <path d="M570 359L808 387" stroke="#050a24" strokeWidth="2" />
        <path d="M573 358C566 360 560 378 559 393C558 407 561 421 565 421" fill="none" stroke="#d010c8" strokeWidth="2" />
        <path d="M807 386C806 400 802 438 800 455" fill="none" stroke="#000" strokeWidth="2.600" />
        <path d="M806 402L801 442" stroke="#b012a6" strokeWidth="1" strokeDasharray="4 4" />
        <path d="M804 421L890 432" stroke="#000" strokeWidth="2.400" />
        <path d="M66 524V501" stroke="#5a5fd8" strokeWidth="1.200" />
        <path d="M66 524L86 525" stroke="#6fd694" strokeWidth="1.200" />
        <path d="M66 524L62 527" stroke="#e36a7c" strokeWidth="1.200" />
        <g fontFamily="'DejaVu Sans', sans-serif" fontSize="10" fontWeight="bold">
          <text x="66" y="504" fill="#2d36dc">z</text>
          <text x="87" y="527" fill="#3be070">y</text>
          <text x="57" y="531" fill="#d81e2c">x</text>
        </g>
        <g fill="#f5f7fb" stroke="#555b68" strokeWidth=".9">
          <ellipse cx="534" cy="314" rx="8" ry="2.600" />
          <ellipse cx="534" cy="314" rx="2.600" ry="8" fillOpacity=".6" />
          <path d="M531 316l6-4M536 319l2 0" />
        </g>
      </svg>
      <button type="button" className="relative flex h-[12px] items-center bg-[#0d8fdd] text-[7px] leading-none font-bold text-[#06263f]">
        <span className="px-[4px]">透视图</span>
        <span className="flex h-full items-center border-l border-[#0a568c] px-px">
          <Icon className="size-[5px]"><path d="M1 4h14l-7 9z" fill="#06263f" /></Icon>
        </span>
      </button>
    </main>
  );
}

const layerActions: Tool[] = [
  ["新图层", <path d="M3 1h7l3 3v11H3z" fill="#fff" stroke="#333" strokeWidth="1.500" />],
  ["新子图层", <path d="M2 1h8v9H2zM6 5h8v10H6z" fill="#ccc" stroke="#999" strokeWidth="1.300" />],
  ["删除", <path d="M2 2l12 12M14 2L2 14" stroke="#aaa" strokeWidth="2" />],
  ["上移", <path d="M1 11l7-6 7 6z" fill="#b0b0b0" stroke="#999" />],
  ["下移", <path d="M1 5l7 6 7-6z" fill="#b0b0b0" stroke="#999" />],
  ["上一级", <path d="M11 1v14L4 8z" fill="#aaa" stroke="#999" />],
  ["过滤器", <><path d="M1 2h13L9 8v7l-3-2V8z" fill="#3056c8" stroke="#1b2f7c" /><path d="M16 12v4h-4z" fill="#333" /></>],
  ["报告", <><path d="M2 1h7l3 3v10H2z" fill="#ccc" stroke="#999" /><path d="M16 12v4h-4z" fill="#333" /></>],
  ["工具", <><path d="M2 5l5-4 6 3-2 4-2-2-6 9-2-1 5-9z" fill="#333" /><path d="M9 8l4 5" stroke="#333" strokeWidth="2" /><path d="M16 12v4h-4z" fill="#333" /></>],
  ["帮助", <><circle cx="8" cy="8" r="7" fill="#2f55cc" stroke="#1a2f86" /><path d="M5.500 6c0-4 5-3 5 0 0 2-2.500 2-2.500 4M8 11.500v1.500" stroke="#fff" strokeWidth="1.700" /></>],
];

function LayerPanel() {
  return (
    <section className="flex min-w-0 flex-1 flex-col border border-r-0 border-[#c2c8d3] bg-white">
      <div className="flex h-[22px] items-center justify-between pr-px pl-[4px]">
        {layerActions.map(([label, art]) => (
          <button key={label} type="button" aria-label={label} className="shrink-0"><Icon className="size-[9px]">{art}</Icon></button>
        ))}
      </div>
      <table className="w-full table-fixed border-collapse text-[7px] leading-none text-[#222]">
        <colgroup>
          <col /><col className="w-[10px]" /><col className="w-[10px]" /><col className="w-[10px]" /><col className="w-[10px]" /><col className="w-[18px]" />
        </colgroup>
        <thead>
          <tr className="h-[12px]">
            <th scope="col" className="py-0 pl-[3px] text-left font-normal">图层</th>
            <td className="border-l border-[#e6e6e6] p-0" /><td className="border-l border-[#e6e6e6] p-0" /><td className="border-l border-[#e6e6e6] p-0" /><td className="border-x border-[#e6e6e6] p-0" />
            <th scope="col" className="p-0 pl-[2px] text-left font-normal whitespace-nowrap">材质</th>
          </tr>
        </thead>
        <tbody>
          {layers.map((l) => (
            <tr key={l.name} className="h-[12px] border-b border-[#ededed]">
              <td className={l.current ? "py-0 pl-[5px] font-bold whitespace-nowrap" : "py-0 pl-[5px] font-['DejaVu_Sans','Noto_Sans_CJK_SC',sans-serif] whitespace-nowrap"}>{l.name}</td>
              <td className="p-0">{l.current && <Icon className="ml-auto size-[8px]"><path d="M1 8l4 5L15 3" stroke="#222" strokeWidth="1.800" /></Icon>}</td>
              <td className="p-0">
                {!l.current && <Icon className="ml-auto size-[8px]"><path d="M8 1c6 0 6 6 3 8v5H5V9C2 7 2 1 8 1z" fill={l.on ? "#fdf083" : "#5b8ee0"} stroke={l.on ? "#9a8724" : "#2b4f92"} strokeWidth="1.500" /></Icon>}
              </td>
              <td className="p-0">
                {!l.current && <Icon className="ml-auto size-[8px]"><path d="M1 7h10v8H1z" fill="#f5d95a" stroke="#6d5514" strokeWidth="1.500" /><path d="M9 7V3c0-2 5-2 5 0v3" stroke="#444" strokeWidth="1.800" /></Icon>}
              </td>
              <td className="p-0"><span className="mx-auto block size-[7px] border border-[#333]" style={{ backgroundColor: l.color }} /></td>
              <td className="p-0"><span className="ml-[5px] block size-[5px] rounded-full bg-[#fafafa]" /></td>
            </tr>
          ))}
        </tbody>
      </table>
      <div className="mt-auto h-[9px] bg-[#f0f0f0] pt-[4px] pl-[10px]"><div className="h-px w-[45px] bg-[#808080]" /></div>
    </section>
  );
}

function PanelTabs() {
  return (
    <div role="tablist" aria-orientation="vertical" className="flex w-[17px] shrink-0 flex-col">
      {panelTabs.map(([label, art], i) => {
        const last = i === panelTabs.length - 1;
        return (
          <button
            key={label}
            type="button"
            role="tab"
            aria-selected={last}
            className={`relative flex w-full flex-col items-center pt-[3px] ${last ? "h-[46px]" : "min-h-0 flex-1"}`}
          >
            <svg viewBox="0 0 17 46" className="absolute top-0 left-0 h-[46px] w-full" aria-hidden="true">
              <path d="M0 0H16.500V28L0 45z" fill="#fff" stroke="#c2c8d3" />
              {last && <path d="M0 1V44" stroke="#fff" strokeWidth="1.500" />}
            </svg>
            <Icon className="relative size-[9px]">{art}</Icon>
            <span className="relative mt-px text-[7px] leading-[10px] text-[#222] [writing-mode:vertical-rl]">{label}</span>
          </button>
        );
      })}
    </div>
  );
}

function SnapBar() {
  return (
    <div role="group" aria-label="物件锁点" className="flex h-[17px] items-center gap-[5px] border-b border-[#c6cad2] pl-[5px] text-[7px] leading-none text-[#222]">
      {snaps.map((s) => (
        <label key={s.label} className="flex shrink-0 items-center gap-[2px]">
          <input type="checkbox" defaultChecked={s.on} className="size-[7px] appearance-none rounded-[1px] border border-[#777] bg-white checked:border-[#0b63b8] checked:bg-[#0b63b8] checked:bg-[linear-gradient(135deg,transparent_40%,#ffffff_40%,#ffffff_60%,transparent_60%)]" />
          {s.label}
        </label>
      ))}
      <label className="mr-[5px] flex items-center gap-[2px]"><input type="checkbox" className="size-[6px] appearance-none rounded-[2px] bg-[#f6f7f9]" />投影</label>
      <label className="flex items-center gap-[2px]"><input type="checkbox" className="size-[6px] appearance-none rounded-[2px] bg-[#f6f7f9]" />停用</label>
    </div>
  );
}

function StatusBar() {
  const cell = "flex shrink-0 items-center justify-center border-r border-[#bcc1ca] whitespace-nowrap";
  return (
    <footer className="flex h-[11px] overflow-hidden pt-px text-[7px] leading-none text-[#222]">
      <span className={`${cell} w-[35px]`}>工作平面</span>
      <span className={`${cell} w-[49px]`}>x -61.347</span>
      <span className={`${cell} w-[50px]`}>y 132.558</span>
      <span className={`${cell} w-[49px]`}>z 0.000</span>
      <span className={`${cell} w-[50px]`}>毫米</span>
      <span className="flex w-[139px] shrink-0 items-center gap-px border-r border-[#bcc1ca] pl-px"><span className="size-[8px] bg-black" />默认</span>
      {modes.map((m) => (
        <button key={m.label} type="button" aria-pressed={m.on} className={`${cell} ${m.width} ${m.on ? "bg-[#e4eff9] font-bold" : ""}`}>{m.label}</button>
      ))}
      <span className="flex items-center pl-[2px] whitespace-nowrap">绝对公差: 0.01</span>
    </footer>
  );
}

export default function App() {
  return (
    <div className="flex min-h-screen flex-col overflow-hidden bg-[#dfe3ec] font-['Noto_Sans','Noto_Sans_CJK_SC',sans-serif]">
      <TitleBar />
      <CommandArea />
      <ToolTabs />
      <div className="flex h-[19px] items-center overflow-hidden bg-linear-to-b from-[#eff1f5] to-[#dde1e9] pb-[2px] pl-[4px]">
        <ToolGroup tools={groupA} className="w-[425px]" />
        <ToolGroup tools={groupB} className="w-[363px]" />
        <Divider />
        <ToolGroup tools={groupC} className="w-[157px]" />
        <Divider />
        <ToolGroup tools={groupD} className="w-[64px]" />
      </div>
      <div className="flex min-h-[430px] flex-1 border-t-2 border-[#d3d8e2]">
        <SideTools />
        <Viewport />
        <div className="flex w-[151px] shrink-0 pt-[5px] pr-px pb-px pl-[3px]">
          <LayerPanel />
          <PanelTabs />
        </div>
      </div>
      <div className="pt-[3px]"><SnapBar /></div>
      <StatusBar />
    </div>
  );
}
